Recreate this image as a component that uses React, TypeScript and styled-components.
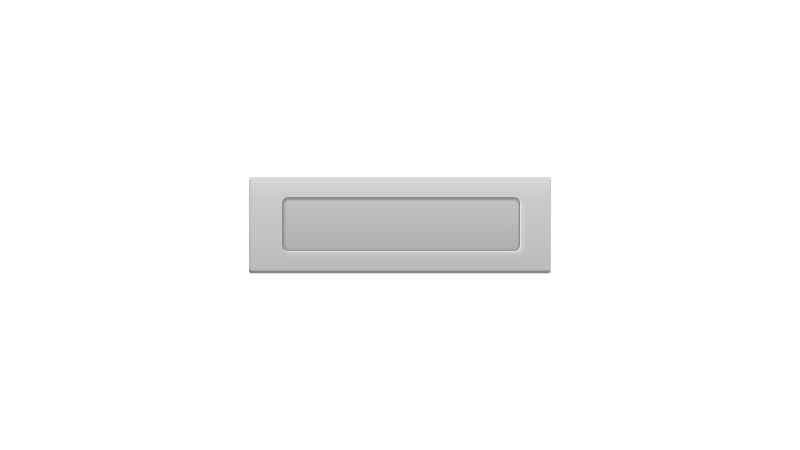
import React, { FC } from 'react';
import styled, { createGlobalStyle } from 'styled-components';

const GlobalStyle = createGlobalStyle`
  html, body {
    margin: 0;
    padding: 0;
    background: #ffffff;
    font-family: "Liberation Sans", Arial, sans-serif;
  }
`;

const Page = styled.div`
  width: 800px;
  height: 450px;
  display: flex;
  align-items: center;
  justify-content: center;
`;

const Plate = styled.div`
  box-sizing: border-box;
  width: 302px;
  height: 96px;
  padding: 20px 31px 22px 33px;
  border-radius: 3px;
  background: linear-gradient(180deg, #d8d8d8 0%, #cbcbcb 20%, #c3c3c3 60%, #bababa 100%);
  box-shadow:
    inset 0 1px 0 #e0e0e0,
    inset 2px 0 2px rgba(0, 0, 0, 0.04),
    inset -1px 0 0 #c9c9c9,
    inset 0 -2px 0 #878787,
    inset 0 -3px 1px #a6a6a6,
    0 1px 1px rgba(0, 0, 0, 0.15);
  display: flex;
`;

const Slot = styled.div`
  flex: 1;
  border-radius: 6px;
  border: 1px solid #8c8c8e;
  border-bottom-color: #98989a;
  background: linear-gradient(180deg, #c2c2c4 0%, #b9b9bb 50%, #afafb1 100%);
  box-shadow:
    inset 0 2px 2px rgba(0, 0, 0, 0.25),
    inset 2px 0 2px rgba(0, 0, 0, 0.12),
    1px 1px 0 rgba(255, 255, 255, 0.35),
    3px 3px 4px rgba(255, 255, 255, 0.3);
`;

const MailSlot: FC = () => (
  <Plate>
    <Slot />
  </Plate>
);

const App: FC = () => (
  <>
    <GlobalStyle />
    <Page>
      <MailSlot />
    </Page>
  </>
);

export default App;
